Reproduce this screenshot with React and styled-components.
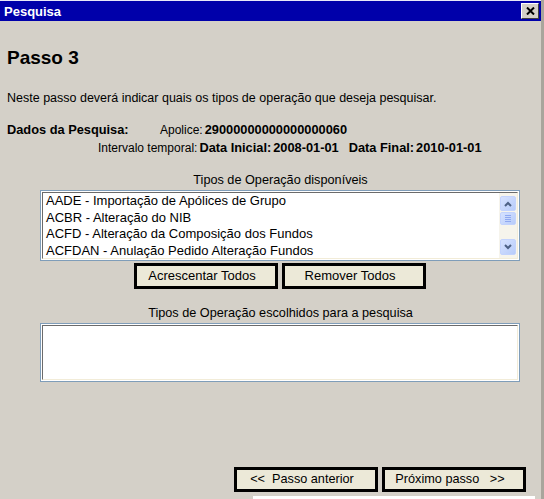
import styled, { createGlobalStyle } from "styled-components";

const GlobalStyle = createGlobalStyle`
  html, body {
    margin: 0;
    padding: 0;
    background: #d4d0c8;
  }
  body {
    font-family: "Liberation Sans", Arial, sans-serif;
    font-size: 12px;
    color: #000;
  }
`;

const operations = [
  "AADE - Importação de Apólices de Grupo",
  "ACBR - Alteração do NIB",
  "ACFD - Alteração da Composição dos Fundos",
  "ACFDAN - Anulação Pedido Alteração Fundos",
];

const Window = styled.div`
  width: 541px;
  height: 499px;
  border-right: 3px solid #a9a59c;
  background: #d4d0c8;
  display: flex;
  flex-direction: column;
  overflow: hidden;
`;

const TitleBar = styled.div`
  height: 21px;
  border-top: 1px solid #e8e8f8;
  background: #0000aa;
  color: #fff;
  font-weight: bold;
  font-size: 13px;
  display: flex;
  align-items: center;
  justify-content: space-between;
  padding: 0 2px 0 4px;
  box-sizing: border-box;
`;

const CloseButton = styled.div`
  width: 18px;
  height: 16px;
  box-sizing: border-box;
  background: #d4d0c8;
  border: 1px solid;
  border-color: #fff #404040 #404040 #fff;
  display: flex;
  align-items: center;
  justify-content: center;
`;

const Heading = styled.h1`
  margin: 26px 0 0 7px;
  font-size: 19px;
  line-height: 22px;
  font-weight: bold;
`;

const Intro = styled.p`
  margin: 22px 0 0 7px;
  font-size: 12.5px;
  line-height: 15px;
`;

const InfoRow = styled.div`
  display: flex;
  align-items: baseline;
  height: 18px;
  line-height: 18px;
  padding-left: ${({ $indent }) => $indent}px;
  margin-top: ${({ $top }) => $top}px;
`;

const InfoLabel = styled.span`
  font-weight: bold;
  font-size: 12.8px;
  width: 153px;
`;

const Plain = styled.span`
  margin-right: 2px;
`;

const Strong = styled.b`
  font-size: 12.8px;
  margin-right: ${({ $gap }) => $gap || 0}px;
`;

const Section = styled.div`
  margin-left: 40px;
  width: 480px;
  display: flex;
  flex-direction: column;
  align-items: center;
`;

const Caption = styled.div`
  font-size: 12.7px;
  height: 15px;
  line-height: 15px;
  margin-top: ${({ $top }) => $top}px;
  margin-bottom: 2px;
  padding-left: 1px;
`;

const Box = styled.div`
  width: 480px;
  height: ${({ $h }) => $h}px;
  box-sizing: border-box;
  border: 1px solid #7f9db9;
  padding: 1px;
  background: #fff;
`;

const BoxInner = styled.div`
  height: 100%;
  box-sizing: border-box;
  border-top: 1px solid #6b6b6b;
  border-left: 1px solid #6b6b6b;
  border-right: 1px solid #f2ecd8;
  border-bottom: 1px solid #f2ecd8;
  display: flex;
  overflow: hidden;
`;

const Items = styled.ul`
  flex: 1;
  margin: 0;
  padding: 0 0 0 3px;
  list-style: none;
  font-size: 13px;
  line-height: 16.7px;
`;

const Scrollbar = styled.div`
  width: 17px;
  background: #f6f4ec;
  display: flex;
  flex-direction: column;
  align-items: center;
  padding: 3px 1px 1px 0;
`;

const ScrollButton = styled.div`
  width: 16px;
  height: ${({ $h }) => $h || 16}px;
  flex-shrink: 0;
  box-sizing: border-box;
  border: 1px solid #c3d3fd;
  border-radius: 2px;
  background: linear-gradient(135deg, #d6e2ff, #b8ccfa);
  display: flex;
  align-items: center;
  justify-content: center;
  margin-top: ${({ $top }) => $top || 0}px;
`;

const Chevron = ({ up }) => (
  <svg width="8" height="6" viewBox="0 0 8 6">
    <path
      d={up ? "M1 5 L4 2 L7 5" : "M1 1 L4 4 L7 1"}
      fill="none"
      stroke="#4d6185"
      strokeWidth="2"
    />
  </svg>
);

const Grip = () => (
  <svg width="8" height="7" viewBox="0 0 8 7">
    <path d="M1 0.5H7M1 2.5H7M1 4.5H7M1 6.5H7" stroke="#8fa8f0" strokeWidth="1" />
  </svg>
);

const ButtonRow = styled.div`
  display: flex;
  gap: 4px;
  margin-top: ${({ $top }) => $top}px;
`;

const Button = styled.button`
  width: 144px;
  height: ${({ $h }) => $h || 26}px;
  box-sizing: border-box;
  border: 3px solid #000;
  background: #ece9d8;
  font-family: "Liberation Sans", Arial, sans-serif;
  font-size: ${({ $fs }) => $fs || 13}px;
  color: #000;
  padding: 0 8px 2px 0;
  white-space: pre;
  cursor: pointer;
`;

const Footer = styled.div`
  margin-top: auto;
  display: flex;
  flex-direction: column;
  align-items: flex-end;
  padding-right: 15px;
`;

const Shelf = styled.div`
  width: 282px;
  height: 3px;
  margin: 4px -9px 0 0;
  background: #fff;
`;

export default function App() {
  return (
    <>
      <GlobalStyle />
      <Window>
        <TitleBar>
          <span>Pesquisa</span>
          <CloseButton>
            <svg width="9" height="8" viewBox="0 0 9 8">
              <path d="M1 0.5L8 7.5M8 0.5L1 7.5" stroke="#000" strokeWidth="2" />
            </svg>
          </CloseButton>
        </TitleBar>

        <Heading>Passo 3</Heading>
        <Intro>
          Neste passo deverá indicar quais os tipos de operação que deseja
          pesquisar.
        </Intro>

        <InfoRow $indent={7} $top={15}>
          <InfoLabel>Dados da Pesquisa:</InfoLabel>
          <Plain>Apolice: </Plain>
          <Strong>29000000000000000060</Strong>
        </InfoRow>
        <InfoRow $indent={98} $top={0}>
          <Plain>Intervalo temporal:</Plain>
          <Strong $gap={2}>Data Inicial:</Strong>
          <Strong $gap={10}>2008-01-01</Strong>
          <Strong $gap={2}>Data Final:</Strong>
          <Strong>2010-01-01</Strong>
        </InfoRow>

        <Section>
          <Caption $top={16}>Tipos de Operação disponíveis</Caption>
          <Box $h={71}>
            <BoxInner>
              <Items>
                {operations.map((op) => (
                  <li key={op}>{op}</li>
                ))}
              </Items>
              <Scrollbar>
                <ScrollButton $h={15}>
                  <Chevron up />
                </ScrollButton>
                <ScrollButton $h={13} $top={1}>
                  <Grip />
                </ScrollButton>
                <ScrollButton $top={14}>
                  <Chevron />
                </ScrollButton>
              </Scrollbar>
            </BoxInner>
          </Box>

          <ButtonRow $top={2}>
            <Button>Acrescentar Todos</Button>
            <Button>Remover Todos</Button>
          </ButtonRow>

          <Caption $top={17}>Tipos de Operação escolhidos para a pesquisa</Caption>
          <Box $h={59}>
            <BoxInner />
          </Box>
        </Section>

        <Footer>
          <ButtonRow $top={0}>
            <Button $h={25} $fs={12.7}>{"<<  Passo anterior"}</Button>
            <Button $h={25} $fs={12.7}>{"Próximo passo   >>"}</Button>
          </ButtonRow>
          <Shelf />
        </Footer>
      </Window>
    </>
  );
}
